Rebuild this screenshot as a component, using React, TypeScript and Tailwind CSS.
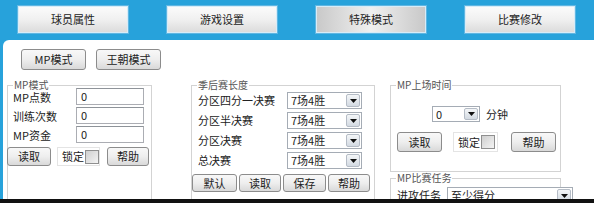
import type { ReactNode } from 'react';
import { clsx } from 'clsx';

const btn =
    'flex items-center justify-center rounded-[3px] border border-[#8c8c8c] bg-linear-to-b from-[#f8f8f8] via-[#eeeeee] to-[#d9d9d9] text-[11px] leading-none text-[#222] whitespace-nowrap';

function Btn({ children, className }: { children: ReactNode; className?: string }) {
    return <button className={clsx(btn, className)}>{children}</button>;
}

function Tab({ children, active }: { children: ReactNode; active?: boolean }) {
    return (
        <button
            className={clsx(
                'flex h-[27px] w-[110px] items-center justify-center border border-[#d6ecf8] text-[11px] text-[#222] shadow-[0_0_0_1px_#5fb6e2]',
                active
                    ? 'bg-linear-to-r from-[#c9c9c9] via-[#f0f0f0] to-[#c9c9c9]'
                    : 'bg-linear-to-b from-[#fbfbfb] via-[#f0f0f0] to-[#dcdcdc]',
            )}
        >
            {children}
        </button>
    );
}

function Group({
    label,
    className,
    children,
}: {
    label: string;
    className?: string;
    children: ReactNode;
}) {
    return (
        <div className={clsx('relative shrink-0 border border-[#d3d3d3]', className)}>
            <span className="absolute -top-[7px] left-[5px] bg-white px-[1px] text-[10px] leading-[11px] whitespace-nowrap text-[#555]">
                {label}
            </span>
            {children}
        </div>
    );
}

function TextBox({ value }: { value: string }) {
    return (
        <div className="flex h-[17px] w-[68px] items-center border border-[#abadb3] border-t-[#8e9399] bg-white pl-[4px] text-[11px] leading-none text-[#222]">
            {value}
        </div>
    );
}

function Combo({ value, className }: { value: string; className?: string }) {
    return (
        <div className={clsx('flex shrink-0 border border-[#a5acb5] bg-white', className)}>
            <span className="flex flex-1 items-center pl-[3px] text-[11px] leading-none whitespace-nowrap text-[#222]">
                {value}
            </span>
            <span className="m-[1px] flex w-[14px] items-center justify-center rounded-[2px] border border-[#b5bcc6] bg-linear-to-b from-[#f4f6f8] to-[#d3dae2]">
                <svg width="7" height="4" viewBox="0 0 7 4">
                    <path d="M0 0h7L3.5 4z" fill="#111" />
                </svg>
            </span>
        </div>
    );
}

function Lock({ className }: { className?: string }) {
    return (
        <div
            className={clsx(
                'flex items-center gap-[1px] border border-[#e4e4e4] pl-[4px] text-[11px] leading-none whitespace-nowrap text-[#222]',
                className,
            )}
        >
            <span>锁定</span>
            <span className="h-[14px] w-[14px] border border-[#8f8f8f] bg-linear-to-br from-[#cfcfcf] to-[#f4f4f4]" />
        </div>
    );
}

const mpRows = [
    { label: 'MP点数', value: '0' },
    { label: '训练次数', value: '0' },
    { label: 'MP资金', value: '0' },
];

const playoffRows = ['分区四分一决赛', '分区半决赛', '分区决赛', '总决赛'];

export default function App() {
    return (
        <div className="flex h-[203px] w-[594px] flex-col overflow-hidden bg-[#27a2db] font-['Noto_Sans_CJK_SC',sans-serif]">
            <div className="flex h-[40px] shrink-0 items-start gap-[39px] pl-[18px] pt-[6px]">
                <Tab>球员属性</Tab>
                <Tab>游戏设置</Tab>
                <Tab active>特殊模式</Tab>
                <Tab>比赛修改</Tab>
            </div>

            <div className="ml-[3px] min-h-0 flex-1 overflow-hidden rounded-tl-[6px] bg-white">
                <div className="flex gap-[10px] pl-[18px] pt-[9px]">
                    <Btn className="h-[21px] w-[65px]">MP模式</Btn>
                    <Btn className="h-[21px] w-[65px]">王朝模式</Btn>
                </div>

                <div className="mt-[15px] flex items-start">
                    <Group label="MP模式" className="ml-[4px] h-[130px] w-[145px]">
                        <div className="flex flex-col gap-[2px] pt-[2px]">
                            {mpRows.map((row) => (
                                <div key={row.label} className="flex h-[17px] items-center">
                                    <span className="w-[68px] pl-[5px] pt-[2px] text-[11px] leading-none whitespace-nowrap text-[#222]">
                                        {row.label}
                                    </span>
                                    <TextBox value={row.value} />
                                </div>
                            ))}
                        </div>
                        <div className="mt-[4px] flex items-center">
                            <Btn className="-ml-[1px] h-[19px] w-[44px]">读取</Btn>
                            <Lock className="ml-[6px] h-[19px] w-[43px]" />
                            <Btn className="ml-[7px] h-[19px] w-[42px]">帮助</Btn>
                        </div>
                    </Group>

                    <Group label="季后赛长度" className="ml-[39px] h-[130px] w-[184px]">
                        <div className="flex flex-col gap-[3px] pt-[6px]">
                            {playoffRows.map((label) => (
                                <div key={label} className="flex h-[17px] items-center">
                                    <span className="w-[95px] pl-[6px] text-[11px] leading-none whitespace-nowrap text-[#222]">
                                        {label}
                                    </span>
                                    <Combo value="7场4胜" className="h-[17px] w-[75px]" />
                                </div>
                            ))}
                        </div>
                        <div className="mt-[5px] flex gap-[2px]">
                            <Btn className="h-[18px] w-[45px]">默认</Btn>
                            <Btn className="h-[18px] w-[42px]">读取</Btn>
                            <Btn className="h-[18px] w-[43px]">保存</Btn>
                            <Btn className="h-[18px] w-[42px]">帮助</Btn>
                        </div>
                    </Group>

                    <div className="ml-[15px] flex w-[171px] flex-col">
                        <Group label="MP上场时间" className="h-[87px] w-[171px]">
                            <div className="flex items-center gap-[6px] pl-[41px] pt-[20px]">
                                <Combo value="0" className="h-[16px] w-[48px]" />
                                <span className="text-[11px] leading-none text-[#222]">分钟</span>
                            </div>
                            <div className="mt-[10px] flex items-center pl-[6px]">
                                <Btn className="h-[20px] w-[45px]">读取</Btn>
                                <Lock className="ml-[11px] h-[20px] w-[45px]" />
                                <Btn className="ml-[13px] h-[20px] w-[45px]">帮助</Btn>
                            </div>
                        </Group>

                        <Group label="MP比赛任务" className="mt-[6px] h-[60px] w-[171px]">
                            <div className="flex items-center pl-[6px] pt-[8px]">
                                <span className="w-[50px] shrink-0 text-[11px] leading-none whitespace-nowrap text-[#222]">
                                    进攻任务
                                </span>
                                <Combo value="至少得分" className="h-[17px] w-[126px]" />
                            </div>
                        </Group>
                    </div>
                </div>
            </div>

            <div className="h-[4px] shrink-0 bg-[#111]" />
        </div>
    );
}
